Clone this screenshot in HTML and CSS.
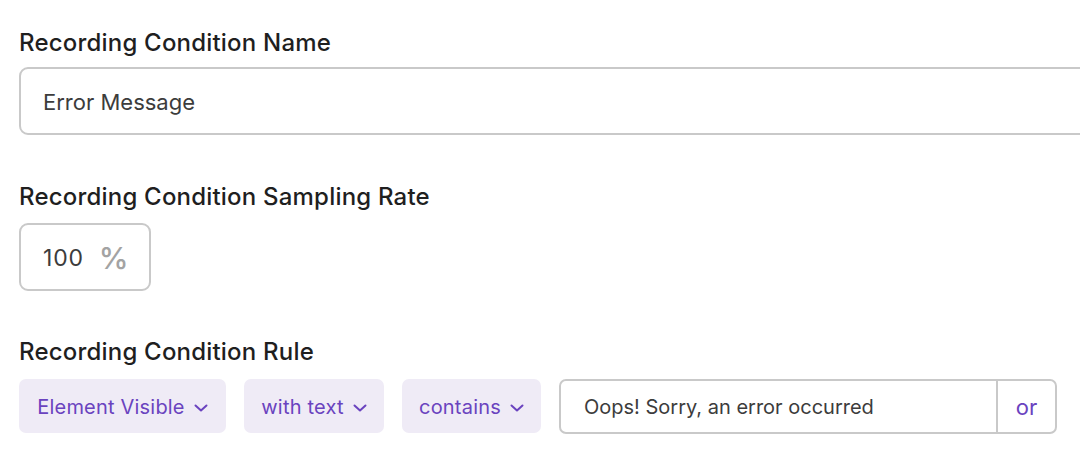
FILE: index.html
```html
<!DOCTYPE html>
<html lang="en">
<head>
<meta charset="utf-8">
<title>Recording Condition</title>
<link rel="stylesheet" href="styles.css">
</head>
<body>
<form class="form">
  <div class="field field-name">
    <label class="label">Recording Condition Name</label>
    <div class="text-input wide"><span class="value">Error Message</span></div>
  </div>
  <div class="field field-rate">
    <label class="label">Recording Condition Sampling Rate</label>
    <div class="text-input rate"><span class="value num">100</span><span class="pct">%</span></div>
  </div>
  <div class="field field-rule">
    <label class="label">Recording Condition Rule</label>
    <div class="rule-row">
      <div class="chip chip-1"><span>Element Visible</span><svg class="chev" viewBox="0 0 14 8" width="14" height="8"><path d="M1.5 1.5 L7 6.5 L12.5 1.5" fill="none" stroke="currentColor" stroke-width="2" stroke-linecap="round" stroke-linejoin="round"/></svg></div>
      <div class="chip chip-2"><span>with text</span><svg class="chev" viewBox="0 0 14 8" width="14" height="8"><path d="M1.5 1.5 L7 6.5 L12.5 1.5" fill="none" stroke="currentColor" stroke-width="2" stroke-linecap="round" stroke-linejoin="round"/></svg></div>
      <div class="chip chip-3"><span>contains</span><svg class="chev" viewBox="0 0 14 8" width="14" height="8"><path d="M1.5 1.5 L7 6.5 L12.5 1.5" fill="none" stroke="currentColor" stroke-width="2" stroke-linecap="round" stroke-linejoin="round"/></svg></div>
      <div class="rule-input">
        <span class="rule-value">Oops! Sorry, an error occurred</span>
        <span class="or">or</span>
      </div>
    </div>
  </div>
</form>
</body>
</html>
```

FILE: styles.css
```css
html, body {
  margin: 0;
  padding: 0;
  background: #ffffff;
  overflow: hidden;
}
body {
  font-family: Inter, Lato, "Noto Sans", sans-serif;
  color: #1f1f1f;
  width: 1080px;
  height: 476px;
}
.form {
  display: flex;
  flex-direction: column;
  padding-left: 19px;
}
.field {
  display: flex;
  flex-direction: column;
  align-items: flex-start;
}
.label {
  font-size: 24px;
  line-height: 28px;
  font-weight: 500;
  letter-spacing: 0.2px;
  color: #1f1f1f;
  padding-top: 1px;
}
.field-name { margin-top: 28px; }
.field-name .label { margin-bottom: 10px; }
.field-rate { margin-top: 47px; }
.field-rate .label { margin-bottom: 12px; }
.field-rule { margin-top: 46px; }
.field-rule .label { margin-bottom: 13px; }

.text-input {
  box-sizing: border-box;
  height: 68px;
  border: 2px solid #c9c9c9;
  border-radius: 9px;
  display: flex;
  align-items: center;
  padding-left: 22px;
  padding-top: 2px;
  font-size: 22px;
  color: #3c3c3c;
}
.wide { width: 1100px; }
.rate { width: 132px; }
.num { font-size: 23px; letter-spacing: 0.8px; }
.pct {
  margin-left: 15px;
  font-size: 30px;
  color: #a3a3a3;
  font-weight: 500;
}
.rule-row {
  display: flex;
  align-items: flex-start;
  gap: 18px;
}
.chip {
  box-sizing: border-box;
  height: 54px;
  background: #efebf6;
  border-radius: 7px;
  display: flex;
  align-items: center;
  justify-content: center;
  gap: 9px;
  padding-top: 2px;
  font-size: 20px;
  letter-spacing: 0.2px;
  color: #6a43bf;
  white-space: pre;
}
.chev {
  margin-top: 1px;
}
.chip-1 { width: 207px; }
.chip-2 { width: 140px; }
.chip-3 { width: 139px; }
.rule-input {
  box-sizing: border-box;
  width: 498px;
  height: 55px;
  border: 2px solid #c9c9c9;
  border-radius: 7px;
  display: flex;
  align-items: stretch;
  font-size: 20px;
}
.rule-value {
  flex: 1;
  display: flex;
  align-items: center;
  padding-left: 23px;
  padding-top: 1px;
  color: #3c3c3c;
  border-right: 2px solid #c9c9c9;
}
.or {
  width: 57px;
  display: flex;
  align-items: center;
  justify-content: center;
  padding-top: 1px;
  color: #6a43bf;
  font-size: 22px;
}
```
